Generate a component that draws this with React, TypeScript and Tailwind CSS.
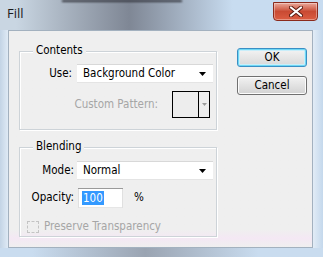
import React from 'react';

const Arrow: React.FC<{ color?: string }> = ({ color = '#000' }) => (
  <svg width="7" height="4" viewBox="0 0 7 4">
    <polygon points="0,0 7,0 3.5,4" fill={color} />
  </svg>
);

const Dropdown: React.FC<{ value: string }> = ({ value }) => (
  <div className="flex h-[19px] w-[136px] items-center justify-between bg-white pl-[6px] pr-[7px] shadow-[inset_0_1px_0_#d8d8d8,inset_0_-1px_0_#e4e4e4]">
    <span>{value}</span>
    <Arrow />
  </div>
);

const GroupBox: React.FC<{ title: string; height: string; children: React.ReactNode; className?: string }> = ({
  title,
  height,
  children,
  className = '',
}) => (
  <div
    className={`relative w-[198px] border border-[#cdd3d8] shadow-[inset_1px_1px_0_#fff,1px_1px_0_#fff] ${height} ${className}`}
  >
    <span className="absolute left-[13px] top-[-9px] bg-[#efefef] px-[3px] leading-[14px]">{title}</span>
    {children}
  </div>
);

export default function App() {
  return (
    <div
      className="flex h-[257px] w-[323px] flex-col overflow-hidden bg-[#c6d9ec] text-[11.5px] text-black"
      style={{ fontFamily: '"DejaVu Sans Condensed", "DejaVu Sans", sans-serif' }}
    >
      {/* title bar */}
      <div className="relative flex h-[30px] shrink-0 items-center bg-linear-to-r from-[#c9d6e2] from-5% via-[#7f8795] via-40% to-[#c8dcf0] to-72%">
        <div className="absolute left-[62px] top-0 h-[2px] w-[120px] bg-[#33363d] blur-[1px]" />
        <span
          className="ml-[7px] mt-[-2px] text-[13px] text-[#1b1b1b]"
          style={{ fontFamily: '"Open Sans", "Noto Sans", sans-serif' }}
        >
          Fill
        </span>
        <div className="ml-auto mr-[5px] mt-[-8px] flex h-[19px] w-[45px] items-center justify-center rounded-b-[4px] border border-[#8a2a1c] bg-linear-to-b from-[#e9a89b] via-[#c94a33] to-[#dc5d42] shadow-[inset_0_0_0_1px_rgba(255,255,255,0.35)]">
          <svg width="14" height="11" viewBox="0 0 14 11">
            <path d="M2 1.5 L12 9.5 M12 1.5 L2 9.5" stroke="#5a1a10" strokeWidth="4" strokeLinecap="round" />
            <path d="M2 1.5 L12 9.5 M12 1.5 L2 9.5" stroke="#fff" strokeWidth="2.2" strokeLinecap="round" />
          </svg>
        </div>
      </div>

      {/* frame + client */}
      <div className="flex h-[218px] shrink-0">
        <div className="w-[8px] bg-linear-to-r from-[#c3d4e5] to-[#dfeaf5]" />
        <div className="flex w-[305px] border border-[#a3b1bf] bg-linear-to-b from-[#efefef] from-92% via-[#f4e8f4] via-96% to-[#efefef]">
          {/* left column */}
          <div className="flex flex-col pl-[10px] pt-[20px]">
            <GroupBox title="Contents" height="h-[79px]">
              <div className="mt-[12px] flex items-center">
                <span className="w-[52px] text-right">Use:</span>
                <div className="ml-[5px]">
                  <Dropdown value="Background Color" />
                </div>
              </div>
              <div className="mt-[8px] flex items-center">
                <span className="w-[138px] text-right text-[#a6a6a6]">Custom Pattern:</span>
                <div className="ml-[14px] flex h-[27px] w-[38px] border border-black bg-[#ededed]">
                  <div className="w-[26px] border-r border-black" />
                  <div className="flex flex-1 items-center justify-center">
                    <svg width="5" height="3" viewBox="0 0 5 3">
                      <polygon points="0,0 5,0 2.5,3" fill="#9a9a9a" />
                    </svg>
                  </div>
                </div>
              </div>
            </GroupBox>

            <GroupBox title="Blending" height="h-[90px]" className="mt-[17px]">
              <div className="mt-[13px] flex items-center">
                <span className="w-[54px] text-right">Mode:</span>
                <div className="ml-[3px]">
                  <Dropdown value="Normal" />
                </div>
              </div>
              <div className="mt-[8px] flex items-center">
                <span className="w-[54px] text-right">Opacity:</span>
                <div className="ml-[4px] flex h-[20px] w-[45px] items-center bg-white pl-[4px] shadow-[inset_0_1px_0_#9a9a9a,inset_1px_0_0_#e0e0e0,inset_-1px_0_0_#e0e0e0,inset_0_-1px_0_#e6e6e6]">
                  <span className="bg-[#3399ff] px-[1px] leading-[14px] text-white">100</span>
                </div>
                <span className="ml-[11px]">%</span>
              </div>
              <div className="mt-[10px] flex items-center pl-[7px]">
                <div className="h-[12px] w-[12px] border border-dashed border-[#c4c4c4] bg-[#efefef]" />
                <span className="ml-[5px] text-[#a6a6a6]">Preserve Transparency</span>
              </div>
            </GroupBox>
          </div>

          {/* buttons */}
          <div className="ml-[20px] flex flex-col gap-[9px] pt-[17px]">
            <button className="h-[19px] w-[70px] rounded-[3px] border border-[#3a8fc4] bg-linear-to-b from-[#f4f4f4] to-[#d8d8d8] leading-none shadow-[inset_0_0_0_1px_#6fd8f5,inset_0_0_0_2px_#c9eefa]">
              OK
            </button>
            <button className="h-[19px] w-[70px] rounded-[3px] border border-[#707070] bg-linear-to-b from-[#f2f2f2] to-[#d2d2d2] leading-none shadow-[inset_0_0_0_1px_#fcfcfc]">
              Cancel
            </button>
          </div>
        </div>
        <div className="flex-1 bg-linear-to-r from-[#e2ecf6] to-[#c4d8ec]" />
      </div>

      {/* bottom frame */}
      <div className="h-[9px] shrink-0 bg-linear-to-r from-[#c9dcef] from-10% via-[#9aa4b2] via-45% to-[#c9dcef] to-80%" />
    </div>
  );
}
